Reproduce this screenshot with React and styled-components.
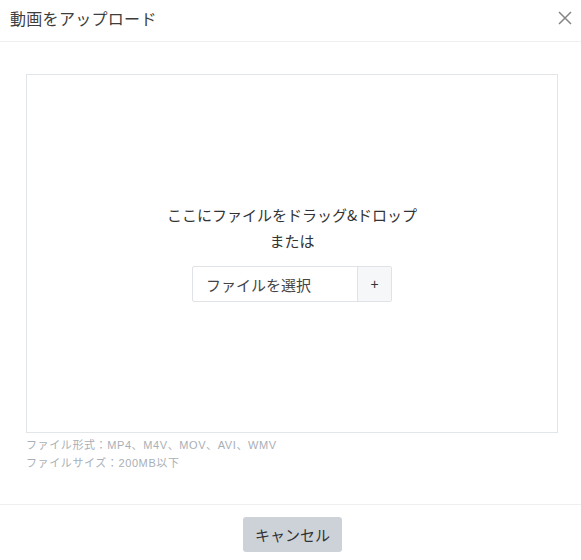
import React from "react";
import styled, { createGlobalStyle } from "styled-components";

const Global = createGlobalStyle`
  html, body { margin: 0; padding: 0; background: #fff; }
  body { font-family: "Noto Sans CJK JP", "Noto Sans", sans-serif; color: #333; }
  * { box-sizing: border-box; }
`;

const Modal = styled.div`
  width: 581px;
  height: 560px;
  display: flex;
  flex-direction: column;
  background: #fff;
`;

const Header = styled.header`
  height: 42px;
  display: flex;
  align-items: center;
  justify-content: space-between;
  padding: 0 9px 6px 10px;
  border-bottom: 1px solid #eeeff1;
`;

const Title = styled.h1`
  margin: 0;
  font-size: 16px;
  font-weight: 400;
  letter-spacing: 0.3px;
  color: #3d3d3d;
`;

const CloseButton = styled.button`
  width: 14px;
  height: 14px;
  padding: 0;
  border: 0;
  background: none;
  display: flex;
  cursor: pointer;
`;

const Body = styled.div`
  flex: 1;
  padding: 32px 23px 0 26px;
  display: flex;
  flex-direction: column;
`;

const DropZone = styled.div`
  height: 359px;
  border: 1px solid #e3e6e9;
  display: flex;
  flex-direction: column;
  align-items: center;
  justify-content: center;
  padding-bottom: 3px;
`;

const DropText = styled.p`
  margin: 0;
  font-size: 15px;
  line-height: 26px;
  text-align: center;
  color: #333;
`;

const SelectGroup = styled.div`
  margin-top: 12px;
  display: flex;
  height: 36px;
  border: 1px solid #dfe2e6;
  border-radius: 2px;
`;

const SelectLabel = styled.div`
  width: 164px;
  display: flex;
  align-items: center;
  padding-left: 13px;
  font-size: 15px;
  color: #444;
`;

const PlusButton = styled.button`
  width: 34px;
  border: 0;
  border-left: 1px solid #dfe2e6;
  background: #f6f7f9;
  font-family: "Liberation Sans", sans-serif;
  font-size: 14px;
  color: #333;
  padding: 0;
  cursor: pointer;
`;

const Notes = styled.div`
  margin-top: 3px;
  font-family: "Liberation Sans", "Noto Sans CJK JP", sans-serif;
  font-size: 11px;
  line-height: 18px;
  letter-spacing: 0.6px;
  color: #a9afb6;
`;

const Footer = styled.footer`
  margin-top: auto;
  border-top: 1px solid #eeeff1;
  height: 56px;
  display: flex;
  justify-content: center;
  padding: 12px 0 0 4px;
`;

const CancelButton = styled.button`
  width: 99px;
  height: 35px;
  border: 0;
  border-radius: 3px;
  background: #cdd2d9;
  font-family: "Noto Sans CJK JP", sans-serif;
  font-size: 15px;
  color: #333;
  cursor: pointer;
`;

export default function App() {
  return (
    <>
      <Global />
      <Modal>
        <Header>
          <Title>動画をアップロード</Title>
          <CloseButton aria-label="close">
            <svg width="14" height="14" viewBox="0 0 14 14">
              <path d="M1 1L13 13M13 1L1 13" stroke="#858585" strokeWidth="1.5" />
            </svg>
          </CloseButton>
        </Header>
        <Body>
          <DropZone>
            <DropText>ここにファイルをドラッグ&ドロップ</DropText>
            <DropText>または</DropText>
            <SelectGroup>
              <SelectLabel>ファイルを選択</SelectLabel>
              <PlusButton>+</PlusButton>
            </SelectGroup>
          </DropZone>
          <Notes>
            <div>ファイル形式：MP4、M4V、MOV、AVI、WMV</div>
            <div>ファイルサイズ：200MB以下</div>
          </Notes>
        </Body>
        <Footer>
          <CancelButton>キャンセル</CancelButton>
        </Footer>
      </Modal>
    </>
  );
}
